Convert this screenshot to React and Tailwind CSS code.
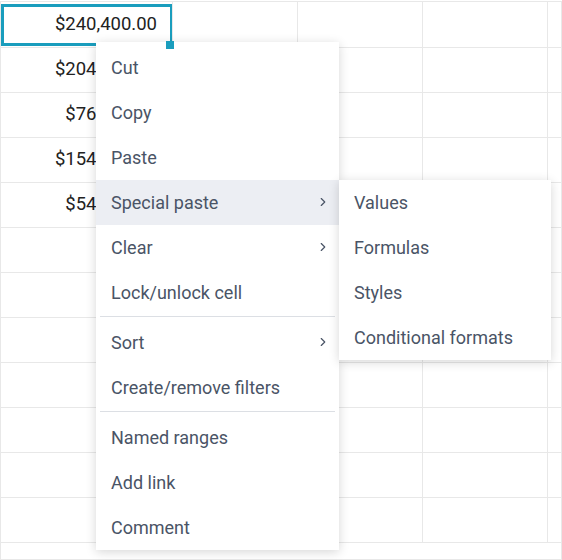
import { ChevronRight } from "lucide-react";

const rows = [
  "$240,400.00",
  "$204,100.00",
  "$76,300.00",
  "$154,700.00",
  "$54,200.00",
  "",
  "",
  "",
  "",
  "",
  "",
  "",
];

const menu = [
  { label: "Cut" },
  { label: "Copy" },
  { label: "Paste" },
  { label: "Special paste", sub: true, active: true },
  { label: "Clear", sub: true },
  { label: "Lock/unlock cell" },
  { sep: true },
  { label: "Sort", sub: true },
  { label: "Create/remove filters" },
  { sep: true },
  { label: "Named ranges" },
  { label: "Add link" },
  { label: "Comment" },
];

const subMenu = ["Values", "Formulas", "Styles", "Conditional formats"];

function Row({ value, first }) {
  return (
    <div className={`flex border-b border-[#e8e8e8] ${first ? "h-[46px]" : "h-[45px]"}`}>
      <div className="flex w-[172px] items-center justify-end border-r border-[#e8e8e8] pr-[15px] text-[18.5px] text-[#222]">
        {value}
      </div>
      <div className="w-[125px] border-r border-[#e8e8e8]" />
      <div className="w-[125px] border-r border-[#e8e8e8]" />
      <div className="w-[125px] border-r border-[#e8e8e8]" />
      <div className="flex-1" />
    </div>
  );
}

export default function App() {
  return (
    <div
      className="relative h-[560px] w-[562px] overflow-hidden bg-white pt-px"
      style={{ fontFamily: "Roboto, 'Liberation Sans', sans-serif" }}
    >
      <div className="h-[559px] border border-[#e8e8e8]">
        {rows.map((v, i) => (
          <Row key={i} value={v} first={i === 0} />
        ))}
      </div>

      {/* selected cell */}
      <div className="absolute left-px top-[4px] z-10 h-[42px] w-[171px] border-[3px] border-r-2 border-[#1a9dbd]" />
      <div className="absolute left-[166px] top-[41px] z-30 h-[8px] w-[8px] bg-[#1a9dbd]" />

      {/* context menu */}
      <div className="absolute left-[96px] top-[42px] z-20 w-[243px] bg-white pt-[3px] text-[18px] text-[#4a5466] shadow-[0_2px_10px_rgba(0,0,0,0.16)]">
        {menu.map((item, i) =>
          item.sep ? (
            <div key={i} className="mx-1 mb-[3px] mt-px h-px bg-[#dcdfe4]" />
          ) : (
            <div
              key={i}
              className={`relative flex h-[45px] items-center justify-between pb-px pl-[15px] pr-[9px] ${
                item.active ? "bg-[#eceef3]" : ""
              }`}
            >
              <span>{item.label}</span>
              {item.sub && <ChevronRight size={14} strokeWidth={2} className="text-[#4a5466]" />}
              {item.active && (
                <div className="absolute left-[243px] top-0 w-[212px] bg-white shadow-[0_2px_10px_rgba(0,0,0,0.16)]">
                  {subMenu.map((s) => (
                    <div key={s} className="flex h-[45px] items-center pb-px pl-[15px]">
                      {s}
                    </div>
                  ))}
                </div>
              )}
            </div>
          )
        )}
      </div>
    </div>
  );
}
